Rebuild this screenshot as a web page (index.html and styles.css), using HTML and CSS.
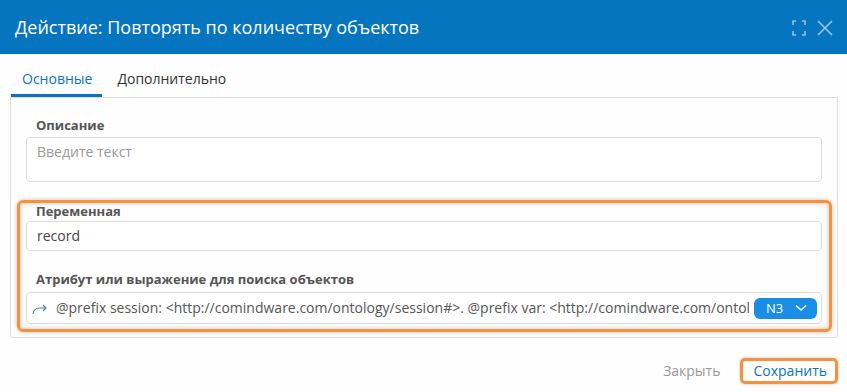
FILE: index.html
```html
<!DOCTYPE html>
<html lang="ru">
<head>
<meta charset="utf-8">
<link rel="stylesheet" href="styles.css">
</head>
<body>
<div class="dialog">
  <header class="header">
    <h1 class="title">Действие: Повторять по количеству объектов</h1>
    <div class="header-tools">
      <svg class="icon-expand" width="14" height="16" viewBox="0 0 14 16" fill="none" stroke="currentColor" stroke-width="1.6">
        <path d="M1 5 V1 H4"/><path d="M10 1 H13 V5"/><path d="M13 11 V15 H10"/><path d="M4 15 H1 V11"/>
      </svg>
      <svg class="icon-close" width="16" height="16" viewBox="0 0 16 16" fill="none" stroke="currentColor" stroke-width="1.5">
        <path d="M1 1 L15 15 M15 1 L1 15"/>
      </svg>
    </div>
  </header>
  <nav class="tabs">
    <div class="tab tab-active">Основные</div>
    <div class="tab">Дополнительно</div>
  </nav>
  <section class="panel">
    <div class="field">
      <div class="label">Описание</div>
      <div class="textarea placeholder">Введите текст</div>
    </div>
    <div class="highlight">
      <div class="field">
        <div class="label">Переменная</div>
        <div class="input">record</div>
      </div>
      <div class="field field-expr">
        <div class="label">Атрибут или выражение для поиска объектов</div>
        <div class="input expr">
          <svg class="icon-arrow" width="16" height="12" viewBox="0 0 16 12" fill="none" stroke="#4a7fb5" stroke-width="1.2">
            <path d="M1 11 C1.5 6.5 4 5 8 5 H14"/><path d="M11 2 L14 5 L11 8"/>
          </svg>
          <span class="expr-text">@prefix session: &lt;http://comindware.com/ontology/session#&gt;. @prefix var: &lt;http://comindware.com/ontol</span>
          <span class="badge">N3
            <svg width="12" height="8" viewBox="0 0 12 8" fill="none" stroke="#fff" stroke-width="1.6"><path d="M1 1.5 L6 6 L11 1.5"/></svg>
          </span>
        </div>
      </div>
    </div>
  </section>
  <footer class="footer">
    <span class="btn btn-close">Закрыть</span>
    <span class="btn btn-save">Сохранить</span>
  </footer>
</div>
</body>
</html>
```

FILE: styles.css
```css
* { box-sizing: border-box; }
html, body { margin: 0; padding: 0; background: #fefefe; }
body { font-family: "Open Sans", "Noto Sans", sans-serif; color: #333; width: 847px; height: 392px; overflow: hidden; }

.header {
  height: 54px;
  background: #0675bf;
  display: flex;
  align-items: center;
  justify-content: space-between;
  padding: 0 14px 0 15px;
}
.title {
  margin: 0;
  font-size: 18px;
  font-weight: 400;
  color: #fff;
}
.header-tools { display: flex; align-items: center; gap: 11px; color: #8ec0e6; margin-top: 1px; }
.icon-close { color: #9cc8ea; }

.tabs {
  display: flex;
  padding: 7px 0 0 11px;
  height: 43px;
}
.tab {
  font-size: 14px;
  padding: 8px 11px 0;
  height: 36px;
  color: #333;
}
.tab-active {
  color: #0675bf;
  border-bottom: 3px solid #0675bf;
  padding: 8px 10px 0 11px;
  margin-right: 4px;
}

.panel {
  margin: 0 9px 0 10px;
  border: 1px solid #ddd;
  border-radius: 0 0 3px 3px;
  padding: 19px 15px 6px;
  height: 241px;
}
.label {
  font-size: 13px;
  font-weight: 700;
  color: #555;
  line-height: 17px;
  margin-bottom: 3px;
  padding-left: 10px;
}
.textarea, .input {
  border: 1px solid #dcdcdc;
  border-radius: 4px;
  font-size: 14px;
  padding: 0 10px;
  background: #fff;
}
.textarea { height: 45px; padding-top: 4px; line-height: 20px; }
.placeholder { color: #999; }
.input { height: 30px; line-height: 28px; color: #444; }

.highlight {
  margin: 18px -10px 0 -9px;
  border: 3px solid #f7923a;
  border-radius: 6px;
  padding: 0 7px 5px 6px;
  box-shadow: 0 0 4px rgba(0,0,0,0.25), inset 0 0 5px rgba(0,0,0,0.25);
}
.highlight .field:first-child .label { margin-bottom: 1px; }
.field-expr { margin-top: 20px; }
.field-expr .label { margin-bottom: 4px; }
.expr {
  height: 32px;
  display: flex;
  align-items: center;
  padding: 0 4px 0 5px;
  overflow: hidden;
  color: #555;
}
.icon-arrow { flex: none; margin-right: 8px; margin-top: 2px; }
.expr-text { flex: 1; white-space: nowrap; overflow: hidden; min-width: 0; margin-right: 5px; }
.badge {
  flex: none;
  display: flex;
  align-items: center;
  gap: 12px;
  background: #1a8de6;
  color: #fff;
  font-size: 13px;
  height: 21px;
  width: 63px;
  border-radius: 6px;
  padding-left: 12px;
  line-height: 21px;
}

.footer {
  display: flex;
  justify-content: flex-end;
  align-items: center;
  gap: 20px;
  padding: 20px 9px 0 0;
}
.btn { font-size: 14px; line-height: 20px; }
.btn-close { color: #999; }
.btn-save {
  color: #0675bf;
  border: 3px solid #f7923a;
  border-radius: 5px;
  padding: 0 8px 0 10px;
  height: 26px;
  line-height: 20px;
  box-shadow: 0 0 3px rgba(0,0,0,0.25);
}
```
